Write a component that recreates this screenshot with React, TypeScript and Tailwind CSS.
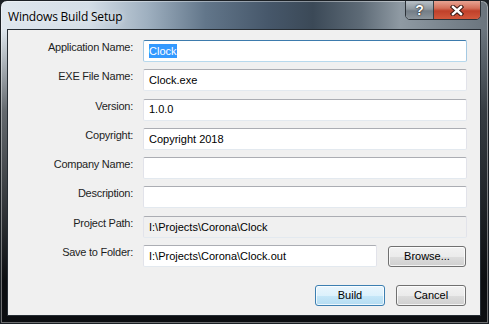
import React from 'react';

const font = { fontFamily: '"Liberation Sans", Arial, sans-serif' };

function TextBox({ children, focused, readOnly }: { children?: React.ReactNode; focused?: boolean; readOnly?: boolean }) {
    return (
        <div
            className={`h-[22px] flex items-center pl-[5px] rounded-[2px] border text-[11px] text-black overflow-hidden whitespace-nowrap ${
                focused
                    ? 'border-t-[#3d7bad] border-x-[#a4c9e3] border-b-[#b7d9ed] bg-white'
                    : readOnly
                      ? 'border-t-[#abadb3] border-x-[#e2e3ea] border-b-[#e3e9ef] bg-[#f0f0f0]'
                      : 'border-t-[#abadb3] border-x-[#e2e3ea] border-b-[#e3e9ef] bg-white'
            }`}
        >
            {children}
        </div>
    );
}

function Button({ label, primary, className = '' }: { label: string; primary?: boolean; className?: string }) {
    return (
        <div
            className={`h-[21px] flex items-center justify-center rounded-[3px] border text-[11px] text-black shadow-[inset_0_0_0_1px_rgba(255,255,255,0.75)] ${
                primary
                    ? 'border-[#3c7fb1] bg-[linear-gradient(to_bottom,#eaf6fd_0%,#dcf1fc_50%,#c6e7f8_51%,#b4dcf2_100%)]'
                    : 'border-[#707070] bg-[linear-gradient(to_bottom,#f2f2f2_0%,#ebebeb_50%,#dddddd_51%,#cfcfcf_100%)]'
            } ${className}`}
        >
            {label}
        </div>
    );
}

const rows: { label: string; value?: string; focused?: boolean; readOnly?: boolean }[] = [
    { label: 'Application Name:', value: 'Clock', focused: true },
    { label: 'EXE File Name:', value: 'Clock.exe' },
    { label: 'Version:', value: '1.0.0' },
    { label: 'Copyright:', value: 'Copyright 2018' },
    { label: 'Company Name:' },
    { label: 'Description:' },
    { label: 'Project Path:', value: 'I:\\Projects\\Corona\\Clock', readOnly: true },
];

export default function App() {
    return (
        <div className="w-[489px] h-[324px] bg-[#1a1f24]" style={font}>
            <div className="w-full h-full rounded-t-[7px] border border-[#1b2025] overflow-hidden bg-[linear-gradient(to_bottom,rgba(0,0,0,0)_0px,rgba(0,0,0,0)_28px,rgba(18,22,26,0.6)_110px,rgba(12,14,17,1)_280px),linear-gradient(to_right,#dfe7ee_0%,#d4dee7_18%,#9fb0c0_30%,#62768a_42%,#46576a_55%,#3b4957_64%,#5e6b77_74%,#8f9aa3_82%,#7d8891_90%,#6a747d_100%)] shadow-[inset_0_0_0_1px_rgba(255,255,255,0.4)] flex flex-col">
                {/* title bar */}
                <div className="h-[28px] flex justify-between shrink-0">
                    <div className="pl-[7px] pt-[7px] text-[12px] text-black tracking-[-0.2px] [text-shadow:0_0_6px_rgba(255,255,255,0.9)]" style={{ fontFamily: '"Open Sans", "Liberation Sans", sans-serif' }}>
                        Windows Build Setup
                    </div>
                    <div className="flex mr-[7px] h-[20px] -mt-px rounded-b-[5px] border border-[#2c3238] overflow-hidden shadow-[inset_0_0_0_1px_rgba(255,255,255,0.45)]">
                        <div className="w-[28px] h-full flex items-center justify-center bg-[linear-gradient(to_bottom,#b8c0c7_0%,#8f989f_45%,#737d86_55%,#8c959c_100%)] border-r border-[#3a4046] text-white font-bold text-[14px] leading-none [text-shadow:0_0_2px_#222,0_0_1px_#000]">
                            ?
                        </div>
                        <div className="w-[46px] h-full flex items-center justify-center bg-[linear-gradient(to_bottom,#e8a493_0%,#d4705a_40%,#c0402a_55%,#d2583c_100%)]">
                            <svg width="14" height="11" viewBox="0 0 14 11">
                                <path d="M3 2 L11 9 M11 2 L3 9" stroke="#3a1a14" strokeWidth="4.5" strokeLinecap="square" />
                                <path d="M3 2 L11 9 M11 2 L3 9" stroke="#ffffff" strokeWidth="2.4" strokeLinecap="square" />
                            </svg>
                        </div>
                    </div>
                </div>

                {/* client */}
                <div className="flex-1 ml-[6px] mr-[7px] mb-[7px] border border-[#262d34] bg-[#f0f0f0] pt-[10px] pl-[8px] pr-[13px] flex flex-col">
                    <div className="grid grid-cols-[117px_1fr] gap-x-[10px] gap-y-[7.3px]">
                        {rows.map((row) => (
                            <React.Fragment key={row.label}>
                                <div className="text-right text-[11px] leading-[13px] tracking-[-0.25px] text-[#1e1e1e] pt-[1px]">{row.label}</div>
                                <TextBox focused={row.focused} readOnly={row.readOnly}>
                                    {row.focused ? (
                                        <span className="bg-[#3399ff] text-white leading-[14px]">{row.value}</span>
                                    ) : (
                                        row.value
                                    )}
                                </TextBox>
                            </React.Fragment>
                        ))}
                        <div className="text-right text-[11px] leading-[13px] tracking-[-0.25px] text-[#1e1e1e] pt-[1px]">Save to Folder:</div>
                        <div className="flex items-start gap-[11px] pr-px">
                            <div className="flex-1">
                                <TextBox>I:\Projects\Corona\Clock.out</TextBox>
                            </div>
                            <Button label="Browse..." className="w-[78px] mt-px" />
                        </div>
                    </div>
                    <div className="flex justify-end gap-[11px] mt-[18px] pr-px">
                        <Button label="Build" primary className="w-[70px]" />
                        <Button label="Cancel" className="w-[70px]" />
                    </div>
                </div>
            </div>
        </div>
    );
}
